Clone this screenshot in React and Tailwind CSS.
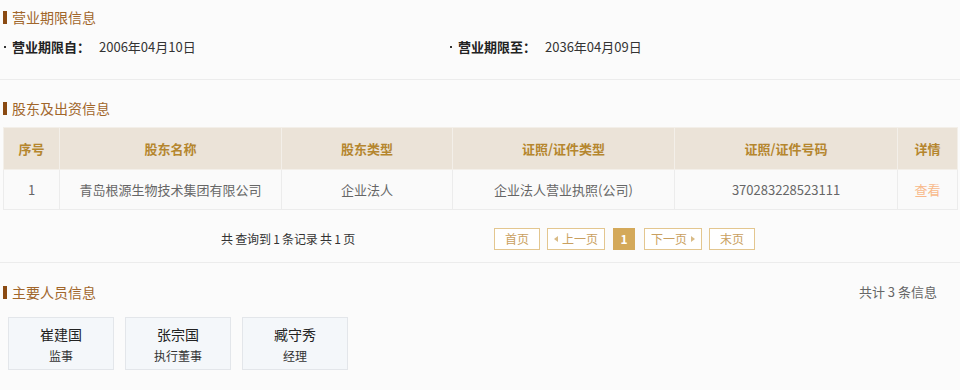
import React from "react";

const font = { fontFamily: '"Noto Sans CJK SC", "Noto Sans", sans-serif' };

function Title({ children }) {
  return (
    <div className="flex items-center h-[20px] pl-[3px]">
      <span className="w-[4px] h-[13px] bg-[#8a4a12]" />
      <span className="ml-[5px] text-[14px] leading-[20px] text-[#a1662b]">{children}</span>
    </div>
  );
}

function Field({ label, value }) {
  return (
    <div className="flex items-center h-[20px] text-[13px] leading-[20px]">
      <span className="w-[2px] h-[2px] bg-[#333] ml-[1px] mr-[6px]" />
      <span className="font-bold text-[#222] w-[87px]">{label}</span>
      <span className="text-[#333]">{value}</span>
    </div>
  );
}

function PageBtn({ children, active, w }) {
  return (
    <div
      className={
        "h-[22px] flex items-center justify-center text-[12px] border " +
        (active
          ? "bg-[#d4a95a] border-[#d4a95a] text-white font-bold"
          : "border-[#e3c68f] text-[#c9a060] bg-white")
      }
      style={{ width: w }}
    >
      {children}
    </div>
  );
}

function Tri({ dir }) {
  return (
    <svg width="4" height="6" viewBox="0 0 4 6" className={dir === "l" ? "mr-[4px]" : "ml-[4px]"}>
      {dir === "l" ? <path d="M4 0 L0 3 L4 6 Z" fill="#d9bb86" /> : <path d="M0 0 L4 3 L0 6 Z" fill="#d9bb86" />}
    </svg>
  );
}

const cols = [
  { t: "序号", w: 56 },
  { t: "股东名称", w: 222 },
  { t: "股东类型", w: 171 },
  { t: "证照/证件类型", w: 222 },
  { t: "证照/证件号码", w: 223 },
  { t: "详情", w: 60 },
];
const row = ["1", "青岛根源生物技术集团有限公司", "企业法人", "企业法人营业执照(公司)", "370283228523111", "查看"];

function Person({ name, role }) {
  return (
    <div className="w-[106px] h-[53px] border border-[#e3e6ea] bg-[#f4f7fa] flex flex-col items-center pt-[6px]">
      <div className="text-[14px] leading-[20px] text-[#222]">{name}</div>
      <div className="text-[12px] leading-[18px] mt-[3px] text-[#333]">{role}</div>
    </div>
  );
}

export default function App() {
  return (
    <div className="w-[960px] h-[390px] overflow-hidden bg-[#fbfbfb]" style={font}>
      <div className="pt-[7px]">
        <Title>营业期限信息</Title>
        <div className="flex mt-[10px] pl-[3px]">
          <div className="w-[446px]">
            <Field label="营业期限自：" value="2006年04月10日" />
          </div>
          <Field label="营业期限至：" value="2036年04月09日" />
        </div>
      </div>
      <div className="mt-[22px] h-px bg-[#ececec]" />

      <div className="mt-[18px]">
        <Title>股东及出资信息</Title>
        <div className="mt-[9px] mx-[3px]">
          <table className="border-collapse table-fixed w-[954px]">
            <thead>
              <tr className="bg-[#ebe3d8] h-[42px]">
                {cols.map((c) => (
                  <th
                    key={c.t}
                    style={{ width: c.w }}
                    className="border border-[#f3efe9] text-[13px] font-bold text-[#b5862e] text-center p-0"
                  >
                    {c.t}
                  </th>
                ))}
              </tr>
            </thead>
            <tbody>
              <tr className="h-[40px] bg-[#fafafa]">
                {row.map((v, i) => (
                  <td
                    key={i}
                    className={
                      "border border-[#ececec] text-[13px] text-center p-0 " +
                      (i === 5 ? "text-[#f8b98a]" : "text-[#666]")
                    }
                  >
                    {v}
                  </td>
                ))}
              </tr>
            </tbody>
          </table>
        </div>
        <div className="flex items-center mt-[18px] h-[22px]">
          <div className="w-[494px] pl-[221px] text-[12px] text-[#333] tracking-[-0.2px]">共 查询到 1 条记录 共 1 页</div>
          <div className="flex items-center">
            <PageBtn w={46}>首页</PageBtn>
            <div className="ml-[7px]">
              <PageBtn w={58}>
                <Tri dir="l" />上一页
              </PageBtn>
            </div>
            <div className="ml-[8px]">
              <PageBtn w={22} active>1</PageBtn>
            </div>
            <div className="ml-[9px]">
              <PageBtn w={58}>
                下一页<Tri dir="r" />
              </PageBtn>
            </div>
            <div className="ml-[7px]">
              <PageBtn w={46}>末页</PageBtn>
            </div>
          </div>
        </div>
      </div>
      <div className="mt-[12px] h-px bg-[#ececec]" />

      <div className="mt-[19px]">
        <div className="flex items-center justify-between pr-[23px]">
          <Title>主要人员信息</Title>
          <span className="text-[13px] text-[#666]">共计 3 条信息</span>
        </div>
        <div className="flex gap-[11px] mt-[15px] pl-[8px]">
          <Person name="崔建国" role="监事" />
          <Person name="张宗国" role="执行董事" />
          <Person name="臧守秀" role="经理" />
        </div>
      </div>
    </div>
  );
}
